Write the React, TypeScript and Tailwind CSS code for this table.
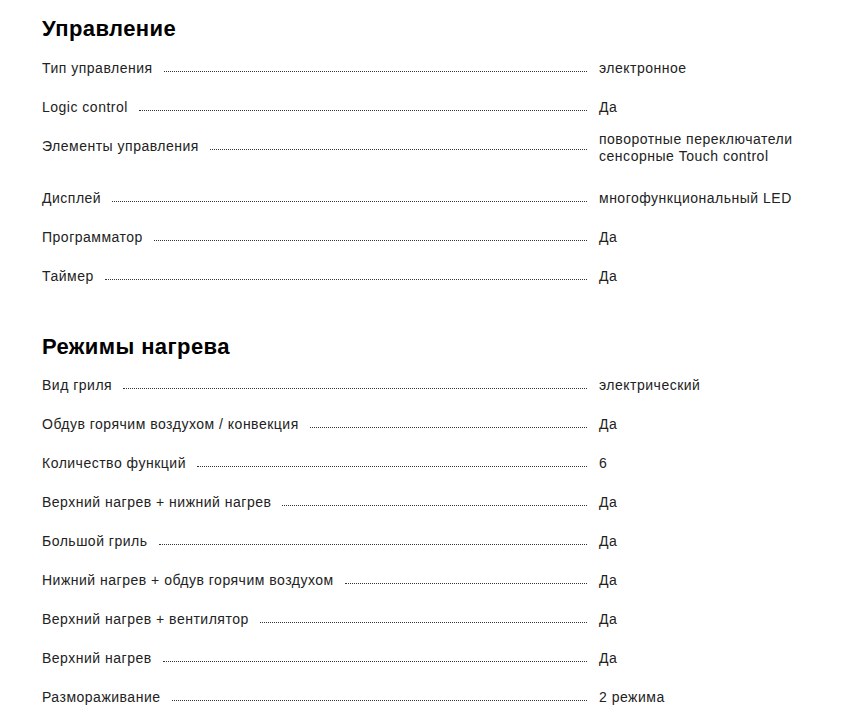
import React from 'react';

type Spec = {
    label: string;
    value: string[];
};

const sections: { title: string; rows: Spec[] }[] = [
    {
        title: 'Управление',
        rows: [
            { label: 'Тип управления', value: ['электронное'] },
            { label: 'Logic control', value: ['Да'] },
            { label: 'Элементы управления', value: ['поворотные переключатели', 'сенсорные Touch control'] },
            { label: 'Дисплей', value: ['многофункциональный LED'] },
            { label: 'Программатор', value: ['Да'] },
            { label: 'Таймер', value: ['Да'] },
        ],
    },
    {
        title: 'Режимы нагрева',
        rows: [
            { label: 'Вид гриля', value: ['электрический'] },
            { label: 'Обдув горячим воздухом / конвекция', value: ['Да'] },
            { label: 'Количество функций', value: ['6'] },
            { label: 'Верхний нагрев + нижний нагрев', value: ['Да'] },
            { label: 'Большой гриль', value: ['Да'] },
            { label: 'Нижний нагрев + обдув горячим воздухом', value: ['Да'] },
            { label: 'Верхний нагрев + вентилятор', value: ['Да'] },
            { label: 'Верхний нагрев', value: ['Да'] },
            { label: 'Размораживание', value: ['2 режима'] },
        ],
    },
];

const SpecRow = ({ row }: { row: Spec }) => {
    const multi = row.value.length > 1;

    return (
        <div className="flex items-start mb-[21px]">
            <div className="flex-1 flex items-end h-[18px]">
                <span className="leading-[18px] whitespace-nowrap">{row.label}</span>
                <span className="flex-1 ml-[11px] mb-[5px] border-b border-dotted border-[#333]" />
            </div>
            <div
                className={
                    multi
                        ? 'w-[204px] ml-[12px] leading-[17px] -mt-[6px] pb-[3px]'
                        : 'w-[204px] ml-[12px] leading-[18px]'
                }
            >
                {row.value.map((line, i) => (
                    <div key={i} className="whitespace-nowrap">{line}</div>
                ))}
            </div>
        </div>
    );
};

const App = () => {
    return (
        <div
            className="min-h-screen bg-white px-[42px] pt-[16px] text-[14px] tracking-[0.5px] text-[#222]"
            style={{ fontFamily: '"Liberation Sans", Arial, sans-serif' }}
        >
            {sections.map((section) => (
                <div key={section.title} className="pb-[28px]">
                    <h2 className="text-[22px] leading-[26px] tracking-[0.4px] font-bold text-black mb-[16px]">
                        {section.title}
                    </h2>
                    <div className="pt-[0.5px]">
                        {section.rows.map((row) => (
                            <SpecRow key={row.label} row={row} />
                        ))}
                    </div>
                </div>
            ))}
        </div>
    );
};

export default App;
